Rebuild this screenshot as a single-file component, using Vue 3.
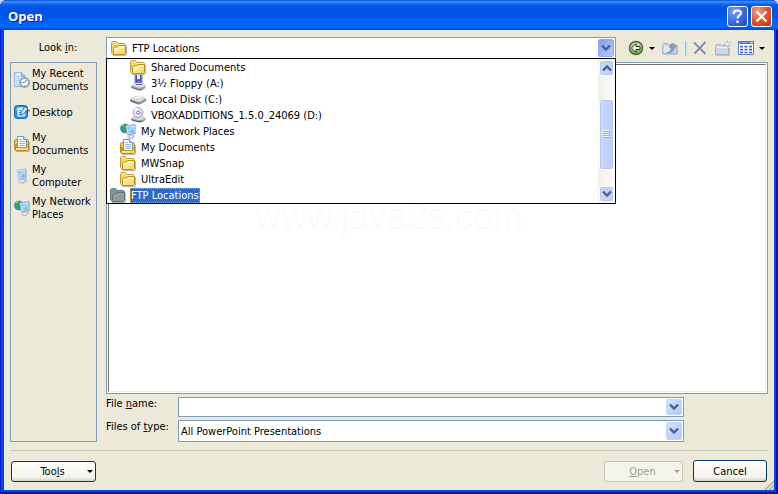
<script setup>
import { ref } from "vue";

const places = [
    { icon: "recent", lines: ["My Recent", "Documents"] },
    { icon: "desktop", lines: ["Desktop"] },
    { icon: "docs", lines: ["My", "Documents"] },
    { icon: "computer", lines: ["My", "Computer"] },
    { icon: "network", lines: ["My Network", "Places"] },
];

const locations = [
    { icon: "folder", name: "Shared Documents", level: 2 },
    { icon: "floppy", name: "3½ Floppy (A:)", level: 2 },
    { icon: "disk", name: "Local Disk (C:)", level: 2 },
    { icon: "cd", name: "VBOXADDITIONS_1.5.0_24069 (D:)", level: 2 },
    { icon: "network", name: "My Network Places", level: 1 },
    { icon: "docs", name: "My Documents", level: 1 },
    { icon: "folder", name: "MWSnap", level: 1 },
    { icon: "folder", name: "UltraEdit", level: 1 },
    { icon: "folder", name: "FTP Locations", level: 0 },
];

const lookIn = ref("FTP Locations");
const listOpen = ref(true);
const fileName = ref("");
const fileType = ref("All PowerPoint Presentations");

const pick = (name) => {
    lookIn.value = name;
    listOpen.value = false;
};
</script>

<template>
    <svg class="defs" aria-hidden="true">
        <defs>
            <linearGradient id="gFolder" x1="0" y1="0" x2="1" y2="1">
                <stop offset="0" stop-color="#fffbc0" />
                <stop offset="1" stop-color="#f7cf5a" />
            </linearGradient>
            <linearGradient id="gScreen" x1="0" y1="0" x2="1" y2="1">
                <stop offset="0" stop-color="#5fb4f6" />
                <stop offset=".5" stop-color="#a4e2fd" />
                <stop offset="1" stop-color="#3f8fe8" />
            </linearGradient>
            <linearGradient id="gGreen" x1="0" y1="0" x2="0" y2="1">
                <stop offset="0" stop-color="#d4efb4" />
                <stop offset="1" stop-color="#62b52c" />
            </linearGradient>
        </defs>
        <symbol id="folder" viewBox="0 0 16 16">
            <path d="M2 15.500h13l.5-1V6" fill="none" stroke="#8a8a80" opacity=".6" />
            <path d="M.5 12.500V3l1-1.500h4L7 3.500h6.500l1 1V13.500l-1 1H2z" fill="#f3d56a" stroke="#c39a34" />
            <path d="M1.500 3.500l.5-1h3L6.500 4.500h7" fill="none" stroke="#fff1a0" />
            <path d="M2.500 13.500V8l1-1h3l1-1.500h7v8l-1 1h-10z" fill="url(#gFolder)" stroke="#c08f22" />
            <path d="M3.500 8.500h3.500l1-1.500h6" fill="none" stroke="#fffde0" />
        </symbol>
        <symbol id="folderGray" viewBox="0 0 16 16">
            <path d="M2 15.500h13l.5-1V6" fill="none" stroke="#8a8a90" opacity=".6" />
            <path d="M.5 12.500V3l1-1.500h4L7 3.500h6.500l1 1V13.500l-1 1H2z" fill="#84958f" stroke="#6b7f8a" />
            <path d="M2.500 13.500V8l1-1h3l1-1.500h7v8l-1 1h-10z" fill="#8c9d94" stroke="#5f7482" />
            <path d="M3.500 8.500h3.500l1-1.500h6" fill="none" stroke="#9dada8" />
        </symbol>
        <symbol id="docs" viewBox="0 0 16 16">
            <path d="M2 15.500h13l.5-1V6" fill="none" stroke="#8a8a80" opacity=".6" />
            <path d="M.5 13V5l1-1.500h12l1 1.500v9H1.500z" fill="#f0c95a" stroke="#c08f22" />
            <path d="M3.500.5h6l3 3v9h-9z" fill="#f6fbff" stroke="#6d9bd0" />
            <path d="M9.500.5v3h3" fill="#c5dcf6" stroke="#6d9bd0" />
            <path d="M5 3.500h3M5 5.500h6M5 7.500h6M5 9.500h6" stroke="#92b8e8" />
            <path d="M1.500 14.500V8.500h1v3h10.500v-3h1.500v5l-1 1z" fill="url(#gFolder)" stroke="#c08f22" />
        </symbol>
        <symbol id="floppy" viewBox="0 0 16 16">
            <path d="M4 0h9v10H4z" fill="#7481c8" />
            <path d="M4.500 0v9M12.500 0v9" stroke="#b2b9e6" />
            <path d="M6 0h5v4H6z" fill="#e6e9f8" />
            <path d="M6.500 0v8M10.500 0v8M7 5.500h3" stroke="#4653a8" />
            <path d="M1 11 4 8h9l2.500 2.500V13L12 15.500H8L1 13z" fill="#a7a7ac" />
            <path d="M1 10.500 4 8h9l2.500 2.500L12 12.500H8z" fill="#dddde2" />
            <path d="M6 9.500h6" stroke="#6a6a74" />
            <path d="M2 12.500l6 2h4" fill="none" stroke="#707078" />
            <path d="M13 13h1.500" stroke="#63bd44" />
        </symbol>
        <symbol id="disk" viewBox="0 0 16 16">
            <path d="M0 8.500 6 5h5l5 2.500v2.500L10 13.500H8L0 10.500z" fill="#8d8d91" />
            <path d="M0 8 6 5h5l5 2.500-6 3.500H8z" fill="#dadadc" />
            <path d="M5 7.500 8 6h4" fill="none" stroke="#fff" />
            <path d="M1 10l7 2.500" stroke="#6a6a70" />
            <path d="M12 10.500h2" stroke="#69bc50" />
        </symbol>
        <symbol id="cd" viewBox="0 0 16 16">
            <path d="M1 11.500 4 9h9l2.500 2v2L12 15.500H8L1 13.500z" fill="#a2a2a8" />
            <path d="M1 11 4 9h9l2.500 2L12 13H8z" fill="#d8d8de" />
            <path d="M2 13l6 1.500h4" fill="none" stroke="#686870" />
            <circle cx="8" cy="5.500" r="5" fill="#e2e3f7" stroke="#a4a5c2" />
            <path d="M8 5.500 4 2.500A5 5 0 0 1 8 1z" fill="#fff" />
            <path d="M8 5.500 12 8.500A5 5 0 0 0 13 5z" fill="#bcbef0" />
            <circle cx="8" cy="5.500" r="1.500" fill="#fff" stroke="#7676a8" />
            <path d="M12 13.500h2" stroke="#69bc50" />
        </symbol>
        <symbol id="computer" viewBox="0 0 16 16">
            <path d="M4 13.500 8 11h4l1.500 1.500L10 15.500H7z" fill="#b7bccb" />
            <path d="M5 13.500 8 12h3.500l-3 2.500z" fill="#eceef5" />
            <path d="M2.500 2 11 .5l1.500 1v9L5 12l-1-1z" fill="#9fb0dc" />
            <path d="M3 2.500 11 1.500v8L4.500 11z" fill="#dfe6f6" />
            <path d="M4 3.500 10.500 2.500v6.500L5 10z" fill="url(#gScreen)" />
        </symbol>
        <symbol id="network" viewBox="0 0 16 16">
            <circle cx="5" cy="5.500" r="4.800" fill="#2f80d8" />
            <path d="M.5 4 2 2 5 .5l2 1.500-1 3-3 2-2-1zM3 8l3-1v3.500l-2-.5z" fill="#3fae38" />
            <path d="M2 3l2-1.500" stroke="#b8eca0" />
            <path d="M7 14 10 12h4l1.500 1L12 16H9z" fill="#b4b9ca" />
            <path d="M8 14l3-1.500h3l-3 2.500z" fill="#eceef5" />
            <path d="M5.500 2.500 14.500 1l1 1v9L8 12.500l-1-1z" fill="#8299d0" />
            <path d="M6 3 14.500 2v8L7.500 11.500z" fill="#dfe6f6" />
            <path d="M7 4 13.500 3v6.500L8 10.500z" fill="url(#gScreen)" />
        </symbol>
        <symbol id="recent" viewBox="0 0 16 16">
            <path d="M.5.5h7l4 4v10H.5z" fill="#dceafc" stroke="#92b2dc" />
            <path d="M7.500.5v4h4" fill="#a9c8f0" stroke="#7ea6dc" />
            <path d="M2 4.500h4M2 6.500h4M2 8.500h3M2 10.500h2M2 12.500h3" stroke="#b3cae9" />
            <circle cx="10.500" cy="10.500" r="4.500" fill="#dde6ee" stroke="#8699ad" stroke-width="1.600" />
            <circle cx="10.500" cy="10.500" r="3" fill="#fafcff" />
            <path d="M10.500 10.500 12.500 8M10.500 10.500H8.500" stroke="#52698c" />
            <path d="M10 13.500h1M7 10.500h1" stroke="#ee8e2c" />
        </symbol>
        <symbol id="desktop" viewBox="0 0 16 16">
            <rect x=".5" y="1.500" width="13" height="13" rx="3" fill="#2d93e6" stroke="#0c63b4" />
            <path d="M3 4l8-.5V12l-7 .5z" fill="#f4faff" stroke="#9ccbf3" />
            <path d="M5 6.500h2M5 8.500h2M5 10.500h4" stroke="#3e8fd8" />
            <path d="M11 2.500 14 5l-5 5.500-2.500.5.500-3z" fill="#c9e3fa" stroke="#1d64ae" />
            <path d="M14 6.500h2" stroke="#ef7c37" stroke-width="2" />
        </symbol>
        <symbol id="back" viewBox="0 0 16 16">
            <circle cx="8" cy="8" r="6.500" fill="url(#gGreen)" stroke="#4c6742" stroke-width="1.500" />
            <path d="M3.500 8 8 3.500v3h4v3H8v3z" fill="#fff" stroke="#26331d" />
        </symbol>
        <symbol id="up" viewBox="0 0 16 16">
            <path d="M.5 13.500v-9l1-1h4l1 1h8v9z" fill="#cbd4e2" stroke="#aab7cb" />
            <path d="M2 6h5v6H2z" fill="#e2e7f0" />
            <path d="M5.500 12.500c3.500 0 4-2 4-5.500H7L10.500 3l3.500 4h-2c0 4-2 5.500-6.500 5.500z" fill="#8d9cba" stroke="#7b8aa8" />
            <path d="M1 14.500h14.500V5" fill="none" stroke="#bbc3cc" />
        </symbol>
        <symbol id="delete" viewBox="0 0 16 16">
            <path d="M2 2.500 13.500 14" stroke="#8090b1" stroke-width="2" />
            <path d="M13.500 2 2.500 13.500" stroke="#8090b1" stroke-width="2" />
        </symbol>
        <symbol id="newFolder" viewBox="0 0 16 16">
            <path d="M.5 14.500v-9l1-1h4l1 1h7v9z" fill="#ccd5e2" stroke="#a6b4ca" />
            <path d="M1.500 7.500h12" stroke="#edf0f5" />
            <path d="M1 15.500h13.500V8" fill="none" stroke="#bbc3cc" />
            <path d="M12.500 0v8M8.500 4h7.500M10 1.500l5 5M15 1.500l-5 5" stroke="#b3c4dc" />
            <path d="M11.500 3h2v2h-2z" fill="#fff" />
        </symbol>
        <symbol id="views" viewBox="0 0 16 16">
            <path d="M.5 1.500h15v13H.5z" fill="#fff" stroke="#5c82c4" />
            <path d="M0 1h16v3H0z" fill="#4a7bcd" />
            <path d="M1 2.500h9" stroke="#7da3e6" />
            <path d="M12 2.500h3" stroke="#e3edff" />
            <path d="M2 6.500h3M2 9.500h3M2 12.500h3M6.500 6.500h3M6.500 9.500h3M6.500 12.500h3M11 6.500h3M11 9.500h3M11 12.500h3" stroke="#3866b4" stroke-width="1.500" />
            <path d="M2 7.500h3M2 10.500h3M6.500 7.500h3M6.500 10.500h3M11 7.500h3M11 10.500h3" stroke="#a3bde8" />
        </symbol>
        <symbol id="chevron" viewBox="0 0 10 8">
            <path d="M1 1.500 5 5.500l4-4" fill="none" stroke="#4d6185" stroke-width="2.400" />
        </symbol>
    </svg>

    <div class="window">
        <header class="titlebar">
            <h1>Open</h1>
            <button class="caption help" aria-label="Help">
                <svg viewBox="0 0 19 19"><path d="M6 7V5.500C6 4 7 3.500 9.500 3.500S13 4 13 6 9.500 8.500 9.500 11.500M9.500 13.500V16" /></svg>
            </button>
            <button class="caption close" aria-label="Close">
                <svg viewBox="0 0 19 19"><path d="M4.500 4.500l10 10M14.500 4.500l-10 10" /></svg>
            </button>
        </header>

        <main class="dialog">
            <div class="look-row">
                <label for="lookIn">Look <u>i</u>n:</label>
                <div class="combo look">
                    <svg class="icon current"><use href="#folder" /></svg>
                    <select id="lookIn" v-model="lookIn" @mousedown.prevent="listOpen = !listOpen">
                        <option v-for="l in locations" :key="l.name">{{ l.name }}</option>
                    </select>
                    <span class="arrow pressed"><svg><use href="#chevron" /></svg></span>
                    <div v-if="listOpen" class="popup">
                        <ul role="listbox" aria-label="Locations">
                            <li v-for="l in locations" :key="l.name" role="option" :aria-selected="l.name === lookIn"
                                :class="[`level${l.level}`, { selected: l.name === lookIn }]" @click="pick(l.name)">
                                <svg class="icon"><use :href="l.name === lookIn ? '#folderGray' : `#${l.icon}`" /></svg>
                                <span>{{ l.name }}</span>
                            </li>
                        </ul>
                        <div class="scrollbar">
                            <button class="scroll-btn flip" aria-label="Scroll up"><svg><use href="#chevron" /></svg></button>
                            <div class="track">
                                <div class="thumb"><i></i><i></i><i></i><i></i></div>
                            </div>
                            <button class="scroll-btn" aria-label="Scroll down"><svg><use href="#chevron" /></svg></button>
                        </div>
                    </div>
                </div>
                <div class="toolbar">
                    <button class="split" aria-label="Back"><svg class="icon"><use href="#back" /></svg><b class="caret"></b></button>
                    <button aria-label="Up one level" disabled><svg class="icon"><use href="#up" /></svg></button>
                    <span class="divider"></span>
                    <button aria-label="Delete" disabled><svg class="icon"><use href="#delete" /></svg></button>
                    <button aria-label="Create new folder" disabled><svg class="icon"><use href="#newFolder" /></svg></button>
                    <button class="split" aria-label="Views"><svg class="icon"><use href="#views" /></svg><b class="caret"></b></button>
                </div>
            </div>

            <div class="body">
                <nav class="places">
                    <button v-for="p in places" :key="p.icon">
                        <svg class="icon"><use :href="`#${p.icon}`" /></svg>
                        <span><template v-for="(line, i) in p.lines" :key="line"><br v-if="i">{{ line }}</template></span>
                    </button>
                </nav>
                <div class="main">
                    <div class="files"><div class="files-inner"></div></div>
                    <div class="field">
                        <label for="fileName">File <u>n</u>ame:</label>
                        <div class="combo name">
                            <input id="fileName" v-model="fileName" type="text">
                            <span class="arrow"><svg><use href="#chevron" /></svg></span>
                        </div>
                    </div>
                    <div class="field">
                        <label for="fileType">Files of <u>t</u>ype:</label>
                        <div class="combo type">
                            <select id="fileType" v-model="fileType">
                                <option>All PowerPoint Presentations</option>
                            </select>
                            <span class="arrow"><svg><use href="#chevron" /></svg></span>
                        </div>
                    </div>
                </div>
            </div>

            <footer class="footer">
                <button class="btn tools"><span>Too<u>l</u>s</span><b class="caret"></b></button>
                <button class="btn open" disabled><span><u>O</u>pen</span><b class="caret"></b></button>
                <button class="btn cancel">Cancel</button>
            </footer>
            <svg class="grip" viewBox="0 0 10 10"><path d="M1 10l9-9M5 10l5-5M9 10l1-1" /></svg>
        </main>
        <div class="watermark">www.java2s.com</div>
    </div>
</template>

<style>
body {
    margin: 0;
    background: #c9d7f0;
}
</style>

<style scoped>
* {
    box-sizing: border-box;
}

.defs {
    position: absolute;
    width: 0;
    height: 0;
}

.window {
    position: relative;
    display: flex;
    flex-direction: column;
    min-height: 100vh;
    font-family: Tahoma, "DejaVu Sans Condensed", "Noto Sans", sans-serif;
    font-size: 11px;
    line-height: 13px;
    color: #000;
    background: #0048e8;
    border-radius: 7px 7px 0 0;
    box-shadow: inset 1px 0 #0019cf, inset -2px 0 #0016a0, inset 0 -2px #0016a0;
    overflow: hidden;
}

button,
input,
select {
    margin: 0;
    padding: 0;
    border: 0;
    background: none;
    font: inherit;
    color: inherit;
    appearance: none;
    outline: none;
}

.icon {
    flex: none;
    display: block;
    width: 16px;
    height: 16px;
}

.titlebar {
    display: flex;
    align-items: center;
    gap: 3px;
    height: 30px;
    padding: 2px 6px 0 8px;
    background: linear-gradient(to bottom, #0a4fd0 0, #3a93ff 6%, #0b62ee 14%, #0053e2 28%, #0055e8 50%, #0066ff 82%, #0066ff 90%, #0046d2 100%);
}

.titlebar h1 {
    flex: 1;
    margin: 0;
    font-family: "Trebuchet MS", "Open Sans", sans-serif;
    font-size: 13px;
    font-weight: bold;
    line-height: 18px;
    color: #fff;
    text-shadow: 1px 1px #0a1883;
}

.caption {
    width: 21px;
    height: 21px;
    border: 1px solid #fff;
    border-radius: 3px;
}

.caption svg {
    display: block;
    width: 19px;
    height: 19px;
    fill: none;
    stroke: #fff;
    stroke-width: 2.200;
}

.help {
    background: radial-gradient(circle at 30% 25%, #7aa2f5, #3a6be6 50%, #1c48c8);
}

.close {
    background: radial-gradient(circle at 30% 25%, #f0a088, #e0552e 50%, #c03010);
}

.dialog {
    position: relative;
    flex: 1;
    display: flex;
    flex-direction: column;
    margin: 0 4px 4px;
    padding: 7px 6px 8px;
    background: #ece9d8;
}

.look-row {
    display: flex;
    height: 25px;
}

.look-row > label {
    width: 96px;
    line-height: 22px;
    text-align: center;
}

.combo {
    position: relative;
    display: flex;
    flex: 1;
    padding: 1px;
    background: #fff;
    border: 1px solid #7f9db9;
}

.combo select,
.combo input {
    flex: 1;
    min-width: 0;
    padding-left: 1px;
}

.look {
    height: 22px;
}

.current {
    margin: 1px 4px 0 3px;
}

.name {
    height: 20px;
}

.type {
    height: 22px;
}

.arrow {
    display: flex;
    align-items: center;
    justify-content: center;
    width: 16px;
    border-radius: 2px;
    background: linear-gradient(135deg, #d6e2fd, #b2c8f8);
    border: 1px solid #c2d3fc;
    pointer-events: none;
}

.pressed {
    background: linear-gradient(135deg, #87a0ee, #b7c8f8);
    border-color: #93a9ee;
}

.arrow svg,
.scroll-btn svg {
    display: block;
    width: 10px;
    height: 8px;
}

.popup {
    position: absolute;
    z-index: 2;
    top: 20px;
    left: -1px;
    right: -1px;
    display: flex;
    background: #fff;
    border: 1px solid #000;
}

.popup ul {
    flex: 1;
    margin: 0;
    padding: 0;
    list-style: none;
}

.popup li {
    display: flex;
    align-items: center;
    gap: 4px;
    height: 16px;
    padding-left: 3px;
}

.popup li.level1 {
    padding-left: 13px;
}

.popup li.level2 {
    padding-left: 23px;
}

.popup li span {
    padding: 1px;
    white-space: nowrap;
}

.popup li.selected span {
    padding: 0;
    color: #fff;
    background: #316ac5;
    border: 1px dotted #e0a040;
}

.scrollbar {
    display: flex;
    flex-direction: column;
    width: 17px;
    padding: 1px;
    background: linear-gradient(to right, #f0efe8, #fdfdfa);
}

.scroll-btn,
.thumb {
    border: 1px solid #fff;
    border-radius: 3px;
    box-shadow: inset 0 0 0 1px #b6caf6;
    background: linear-gradient(to right, #cbdafc, #bccffb);
}

.scroll-btn {
    display: flex;
    align-items: center;
    justify-content: center;
    height: 16px;
}

.flip svg {
    transform: rotate(180deg);
}

.track {
    flex: 1;
    padding-top: 23px;
}

.thumb {
    display: flex;
    flex-direction: column;
    align-items: center;
    justify-content: center;
    gap: 1px;
    height: 71px;
}

.thumb i {
    width: 7px;
    height: 1px;
    background: #8cb0f8;
    box-shadow: -1px -1px #eef4fe;
}

.toolbar {
    display: flex;
    align-items: center;
    justify-content: space-between;
    width: 152px;
    height: 22px;
    padding: 0 3px 0 12px;
}

.split {
    display: flex;
    align-items: center;
    gap: 5px;
}

.caret {
    border: 3px solid transparent;
    border-top-color: currentColor;
    border-bottom: 0;
}

.divider {
    flex: none;
    width: 1px;
    height: 15px;
    background: #8fc0f8;
    box-shadow: 1px 0 #c4dcf4;
}

.body {
    flex: 1;
    display: flex;
    gap: 9px;
}

.places {
    width: 87px;
    padding: 1px 0 0 3px;
    border: 1px solid #7f9db9;
}

.places button {
    display: flex;
    align-items: center;
    gap: 2px;
    width: 100%;
    height: 32px;
    text-align: left;
    white-space: nowrap;
}

.main {
    flex: 1;
    display: flex;
    flex-direction: column;
    gap: 3px;
}

.files {
    flex: 1;
    display: flex;
    padding: 1px;
    background: #fff;
    border: 1px solid #7f9db9;
}

.files-inner {
    flex: 1;
    border: 1px solid #716f64;
    border-right-color: #f1efe2;
    border-bottom-color: #f1efe2;
}

.field {
    display: flex;
    padding-right: 84px;
}

.field label {
    width: 72px;
}

.footer {
    display: flex;
    align-items: flex-end;
    margin-top: 8px;
    padding-top: 9px;
    border-top: 1px solid #cac8b8;
}

.btn {
    display: flex;
    align-items: center;
    justify-content: center;
    height: 21px;
    border: 1px solid #003c74;
    border-radius: 3px;
    background: linear-gradient(to bottom, #fff, #f3f2ec 80%, #d8d2c4);
}

.btn span {
    flex: 1;
    padding-left: 6px;
    text-align: center;
}

.btn .caret {
    margin-right: 2px;
}

.tools {
    width: 85px;
    margin: 0 auto 0 1px;
}

.open {
    width: 79px;
    margin-right: 10px;
    color: #a1a192;
    background: #f5f4ea;
    border-color: #c9c7ba;
}

.cancel {
    width: 74px;
    height: 22px;
    margin-right: 1px;
}

.grip {
    position: absolute;
    right: 0;
    bottom: 0;
    width: 10px;
    height: 10px;
    stroke: #b0ad9c;
    stroke-width: 1.500;
}

.watermark {
    position: absolute;
    z-index: 3;
    top: 195px;
    left: 0;
    right: 0;
    font-family: "Liberation Sans", Arial, sans-serif;
    font-size: 36px;
    line-height: 44px;
    text-align: center;
    color: rgba(128, 128, 128, 0.05);
    pointer-events: none;
}
</style>
